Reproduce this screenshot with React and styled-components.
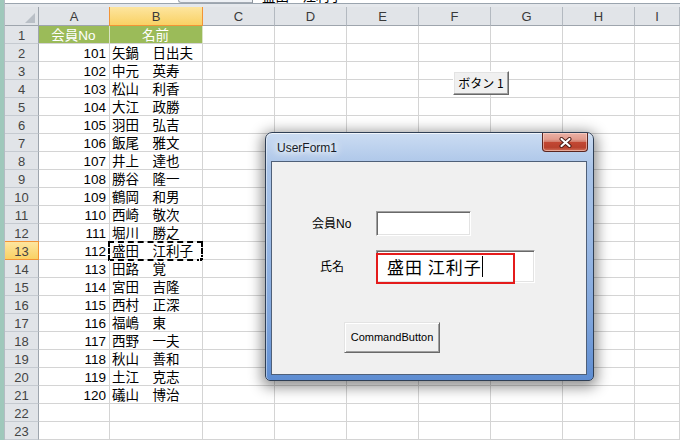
import React from 'react';
import styled, { createGlobalStyle } from 'styled-components';

const FONT = `"Liberation Sans", "Noto Sans CJK JP", sans-serif`;
const JP = `"Noto Sans CJK JP", "Liberation Sans", sans-serif`;

const Global = createGlobalStyle`
  html, body { margin: 0; padding: 0; background: #fff; overflow: hidden; }
  #root { width: 680px; height: 440px; }
  * { box-sizing: border-box; }
`;

const Page = styled.div`
  position: relative;
  width: 680px;
  height: 440px;
  overflow: hidden;
  display: flex;
  background: #fff;
`;

const Edge = styled.div`
  flex: none;
  width: 5px;
  background: #9fc8bb;
  border-right: 1px solid #b4bcc3;
`;

const Main = styled.div`
  flex: 1;
  min-width: 0;
  display: flex;
  flex-direction: column;
`;

const FormulaBar = styled.div`
  height: 5px;
  display: flex;
  background: #fff;
  border-bottom: 1px solid #9aa4ae;
  overflow: hidden;
`;

const NameBox = styled.div`
  width: 173px;
  background: #fff;
`;

const FxArea = styled.div`
  width: 74px;
  background: #eef1f5;
  border-left: 1px solid #a3aab3;
  border-bottom: 1px solid #a3aab3;
  border-bottom-left-radius: 9px;
`;

const FormulaInput = styled.div`
  flex: 1;
  border-left: 1px solid #8c949c;
  padding-left: 9px;
  font: 13.5px/16px ${JP};
  color: #000;
  white-space: nowrap;
`;

const FormulaText = styled.div`
  margin-top: -13px;
`;

const Band = styled.div`
  height: 3px;
  background: #e5e8ec;
`;

const Sheet = styled.div`
  display: grid;
  grid-template-columns: 34px 71px 93px repeat(6, 72px) 1fr;
  grid-template-rows: 19px;
  grid-auto-rows: 18px;
`;

const HeadBase = styled.div`
  display: flex;
  align-items: center;
  justify-content: center;
  font: 13px/1 ${FONT};
  color: #3a3a3a;
  position: relative;
`;

const Corner = styled(HeadBase)`
  background: #e1e4e8;
  border-right: 1px solid #9ea5ad;
  border-bottom: 1px solid #9ea5ad;
  svg { position: absolute; right: 3px; bottom: 2px; }
`;

const ColHead = styled(HeadBase)`
  background: ${p => (p.$active ? 'linear-gradient(#fde59f, #f9d164)' : '#e1e4e8')};
  border-right: 1px solid ${p => (p.$active ? '#f29436' : '#b3b9c0')};
  border-bottom: 1px solid ${p => (p.$active ? '#f29436' : '#9ea5ad')};
  box-shadow: ${p => (p.$active ? '-1px 0 0 #f29436' : 'none')};
  padding-top: 1px;
`;

const RowHead = styled(HeadBase)`
  background: ${p => (p.$active ? 'linear-gradient(#fde59f, #f9d164)' : '#e1e4e8')};
  border-right: 1px solid ${p => (p.$active ? '#f29436' : '#9ea5ad')};
  border-bottom: 1px solid ${p => (p.$active ? '#f29436' : '#c5cad0')};
  box-shadow: ${p => (p.$active ? '0 -1px 0 #f29436' : 'none')};
  padding-top: 1px;
  color: #444;
`;

const Cell = styled.div`
  position: relative;
  border-right: 1px solid ${p => (p.$fill ? '#d9e4c4' : '#d4d4d4')};
  border-bottom: 1px solid #d4d4d4;
  background: ${p => p.$fill || 'transparent'};
  color: ${p => (p.$fill ? '#fff' : '#000')};
  font: 13.5px/17px ${FONT};
  padding: 1px 3px 0 2px;
  text-align: ${p => p.$align || 'left'};
  white-space: nowrap;
`;

const Marquee = styled.span`
  position: absolute;
  left: -2px;
  top: -1px;
  right: -1px;
  bottom: -2px;
  border: 2px dashed #000;
  pointer-events: none;
`;

const FillHandle = styled.span`
  position: absolute;
  right: -3px;
  bottom: -3px;
  width: 5px;
  height: 5px;
  background: #000;
  border: 1px solid #fff;
`;

const SheetButton = styled.button`
  position: absolute;
  left: 453px;
  top: 71px;
  width: 56px;
  height: 24px;
  padding: 0 0 1px;
  background: #f0f0f0;
  font: 12px/1 ${JP};
  color: #000;
  border: 1px solid;
  border-color: #fff #696969 #696969 #fff;
  box-shadow: inset -1px -1px 0 #a0a0a0, inset 1px 1px 0 #e3e3e3;
`;

/* ---------- UserForm window ---------- */

const Win = styled.div`
  position: absolute;
  left: 265px;
  top: 132px;
  width: 329px;
  height: 249px;
  display: flex;
  flex-direction: column;
  padding: 0 6px 5px 5px;
  border: 1px solid #2f3f55;
  border-radius: 7px 7px 5px 5px;
  background: linear-gradient(180deg, #cbdcf2 0%, #aac4e8 14%, #9dbbe5 40%, #7fa5dc 75%, #5e8dd2 100%);
  box-shadow: 0 3px 14px 3px rgba(0, 0, 0, 0.45), inset 0 1px 0 rgba(255, 255, 255, 0.7),
    inset 1px 0 0 rgba(255, 255, 255, 0.45);
`;

const TitleBar = styled.div`
  height: 28px;
  display: flex;
  justify-content: space-between;
  align-items: flex-start;
`;

const Title = styled.div`
  margin: 8px 0 0 2px;
  padding: 0 4px;
  font: 12px/14px ${FONT};
  color: #161c27;
  text-shadow: 0 0 6px #fff, 0 0 10px #fff, 0 0 12px #eaf2fc;
`;

const CloseBtn = styled.div`
  width: 46px;
  height: 19px;
  margin-right: -1px;
  display: flex;
  align-items: center;
  justify-content: center;
  border: 1px solid #5a2520;
  border-top: none;
  border-radius: 0 0 4px 4px;
  background: linear-gradient(180deg, #eab1a6 0%, #e29c8e 35%, #d27d6c 48%, #c24733 52%, #b8412d 80%, #d0705a 100%);
  box-shadow: inset 0 0 0 1px rgba(255, 220, 210, 0.55);
`;

const Client = styled.div`
  flex: 1;
  display: flex;
  flex-direction: column;
  background: #f0f0f0;
  border: 1px solid #4f6079;
`;

const FieldRow = styled.div`
  display: flex;
  align-items: center;
  margin-top: ${p => p.$gap}px;
  height: ${p => p.$h}px;
`;

const Label = styled.div`
  width: 104px;
  padding-left: ${p => p.$indent}px;
  font: 12px/14px ${FONT};
  color: #000;
`;

const TextBox = styled.div`
  position: relative;
  width: ${p => p.$w}px;
  height: 100%;
  display: flex;
  align-items: center;
  padding-left: 10px;
  background: #fff;
  border: 1px solid;
  border-color: #a0a0a0 #fff #fff #a0a0a0;
  box-shadow: inset 1px 1px 0 #696969, inset -1px -1px 0 #e3e3e3;
  font: 17px/21px ${JP};
  letter-spacing: 1px;
  color: #000;
  white-space: pre;
`;

const Caret = styled.span`
  display: inline-block;
  width: 1px;
  height: 21px;
  margin-left: 0;
  background: #000;
`;

const RedMark = styled.span`
  position: absolute;
  left: -1px;
  top: 2px;
  width: 139px;
  height: 31px;
  border: 2px solid #e41b1b;
  pointer-events: none;
`;

const CommandButton = styled.button`
  margin-left: 72px;
  width: 96px;
  height: 31px;
  padding: 0 0 1px;
  background: #f0f0f0;
  font: 11px/1 ${FONT};
  color: #000;
  border: 1px solid;
  border-color: #e3e3e3 #696969 #696969 #e3e3e3;
  box-shadow: inset 1px 1px 0 #fff, inset -1px -1px 0 #a0a0a0;
`;

const ButtonRow = styled.div`
  display: flex;
  margin-top: 39px;
`;

const COLS = ['A', 'B', 'C', 'D', 'E', 'F', 'G', 'H', 'I'];

const DATA = [
  ['101', '矢鍋　日出夫'],
  ['102', '中元　英寿'],
  ['103', '松山　利香'],
  ['104', '大江　政勝'],
  ['105', '羽田　弘吉'],
  ['106', '飯尾　雅文'],
  ['107', '井上　達也'],
  ['108', '勝谷　隆一'],
  ['109', '鶴岡　和男'],
  ['110', '西崎　敬次'],
  ['111', '堀川　勝之'],
  ['112', '盛田　江利子'],
  ['113', '田路　覚'],
  ['114', '宮田　吉隆'],
  ['115', '西村　正深'],
  ['116', '福嶋　東'],
  ['117', '西野　一夫'],
  ['118', '秋山　善和'],
  ['119', '土江　克志'],
  ['120', '礒山　博治'],
];

function SheetRow({ n }) {
  const green = '#9bbb59';
  let a = null;
  let b = null;
  if (n === 1) {
    a = '会員No';
    b = '名前';
  } else if (n - 2 < DATA.length) {
    [a, b] = DATA[n - 2];
  }
  return (
    <>
      <RowHead $active={n === 13}>{n}</RowHead>
      <Cell $align={n === 1 ? 'center' : 'right'} $fill={n === 1 ? green : undefined}>
        {a}
      </Cell>
      <Cell $align={n === 1 ? 'center' : 'left'} $fill={n === 1 ? green : undefined}>
        {b}
        {n === 13 && (
          <Marquee>
            <FillHandle />
          </Marquee>
        )}
      </Cell>
      {COLS.slice(2).map(c => (
        <Cell key={c} />
      ))}
    </>
  );
}

export default function App() {
  const rows = Array.from({ length: 23 }, (_, i) => i + 1);
  return (
    <Page>
      <Global />
      <Edge />
      <Main>
        <FormulaBar>
          <NameBox />
          <FxArea />
          <FormulaInput>
            <FormulaText>盛田　江利子</FormulaText>
          </FormulaInput>
        </FormulaBar>
        <Band />
        <Sheet>
          <Corner>
            <svg width="10" height="10" viewBox="0 0 10 10">
              <polygon points="10,0 10,10 0,10" fill="#b9bfc6" />
            </svg>
          </Corner>
          {COLS.map(c => (
            <ColHead key={c} $active={c === 'B'}>
              {c}
            </ColHead>
          ))}
          {rows.map(n => (
            <SheetRow key={n} n={n} />
          ))}
        </Sheet>
      </Main>

      <SheetButton>ボタン 1</SheetButton>

      <Win>
        <TitleBar>
          <Title>UserForm1</Title>
          <CloseBtn>
            <svg width="13" height="11" viewBox="0 0 13 11">
              <path d="M2.5 2 L10.5 9 M10.5 2 L2.5 9" stroke="#4a1a14" strokeWidth="4" strokeLinecap="round" />
              <path d="M2.5 2 L10.5 9 M10.5 2 L2.5 9" stroke="#fff" strokeWidth="2.2" strokeLinecap="round" />
            </svg>
          </CloseBtn>
        </TitleBar>
        <Client>
          <FieldRow $gap={49} $h={25}>
            <Label $indent={40}>会員No</Label>
            <TextBox $w={95} />
          </FieldRow>
          <FieldRow $gap={14} $h={33}>
            <Label $indent={48}>氏名</Label>
            <TextBox $w={159}>
              {'盛田 江利子'}
              <Caret />
              <RedMark />
            </TextBox>
          </FieldRow>
          <ButtonRow>
            <CommandButton>CommandButton</CommandButton>
          </ButtonRow>
        </Client>
      </Win>
    </Page>
  );
}
